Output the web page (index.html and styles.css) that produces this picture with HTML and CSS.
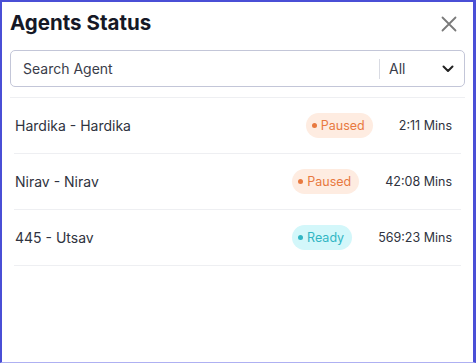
FILE: index.html
```html
<!DOCTYPE html>
<html>
<head>
<meta charset="utf-8">
<link rel="stylesheet" href="styles.css">
</head>
<body>
<div class="panel">
  <div class="header">
    <h1 class="title">Agents Status</h1>
    <svg class="close" width="16" height="16" viewBox="0 0 16 16"><path d="M1.5 1.5L14.5 14.5M14.5 1.5L1.5 14.5" stroke="#7a7a7a" stroke-width="1.8" fill="none" stroke-linecap="round"/></svg>
  </div>
  <div class="search">
    <span class="placeholder">Search Agent</span>
    <span class="divider"></span>
    <span class="select">All</span>
    <svg class="chev" width="12" height="8" viewBox="0 0 12 8"><path d="M1.5 1.5L6 6L10.5 1.5" stroke="#222" stroke-width="2" fill="none" stroke-linecap="round" stroke-linejoin="round"/></svg>
  </div>
  <div class="list">
    <div class="row">
      <span class="name">Hardika - Hardika</span>
      <span class="badge paused"><i class="dot"></i>Paused</span>
      <span class="time">2:11 Mins</span>
    </div>
    <div class="row">
      <span class="name">Nirav - Nirav</span>
      <span class="badge paused"><i class="dot"></i>Paused</span>
      <span class="time">42:08 Mins</span>
    </div>
    <div class="row">
      <span class="name">445 - Utsav</span>
      <span class="badge ready"><i class="dot"></i>Ready</span>
      <span class="time">569:23 Mins</span>
    </div>
  </div>
</div>
</body>
</html>
```
FILE: styles.css
```css
* { box-sizing: border-box; }
html, body { margin: 0; padding: 0; }
body {
  width: 476px;
  height: 363px;
  background: #fff;
  font-family: Inter, "Noto Sans", sans-serif;
  color: #2f3340;
}
.panel {
  width: 476px;
  height: 363px;
  border-style: solid;
  border-color: #4a4fd6 #4a4fd6 #aeb0f2 #4a4fd6;
  border-width: 2px 3px 1px 2px;
  padding: 0 8px 0 8px;
  overflow: hidden;
}
.header {
  display: flex;
  align-items: center;
  justify-content: space-between;
  height: 40px;
}
.title {
  margin: 0;
  font-size: 20.5px;
  font-weight: 700;
  color: #151826;
}
.close { margin-right: 8px; margin-top: 3px; }
.search {
  margin-top: 8px;
  height: 37px;
  border: 1px solid #c3c6d8;
  border-radius: 5px;
  display: flex;
  align-items: center;
  padding: 0 10px 0 12px;
  font-size: 14px;
}
.placeholder { flex: 1; color: #3a3d4a; }
.divider { width: 1px; height: 20px; background: #d9dbe3; margin-right: 9px; }
.select { flex: 0 0 53px; color: #3a3d4a; }
.list {
  margin-top: 10px;
  border-top: 1px solid #eeeff2;
}
.row {
  display: flex;
  align-items: center;
  height: 56px;
  margin: 0 4px 0 4px;
  padding: 0 3px 0 1px;
  border-bottom: 1px solid #eeeff2;
  font-size: 14px;
}
.name { flex: 1; color: #2f3340; }
.badge {
  display: inline-flex;
  align-items: center;
  height: 25px;
  border-radius: 13px;
  padding: 0 8px 0 6px;
  font-size: 12.5px;
}
.dot {
  width: 5px; height: 5px; border-radius: 50%;
  margin-right: 4px; display: inline-block;
}
.paused { background: #feece1; color: #e8793f; }
.paused .dot { background: #e8793f; }
.ready { background: #d3f7fa; color: #31b6c4; }
.ready .dot { background: #31b6c4; }
.time {
  margin-left: 26px;
  color: #2f3340;
  font-size: 12.5px;
  text-align: right;
  margin-right: 6px;
}
```
